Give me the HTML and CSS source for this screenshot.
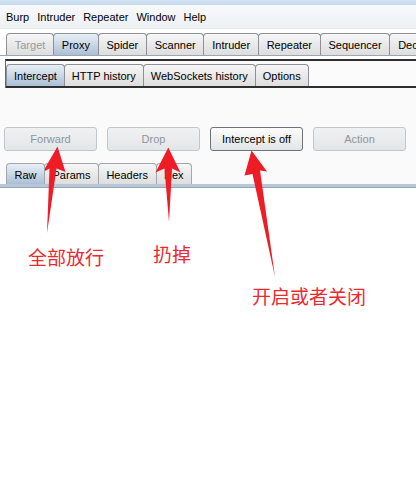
FILE: index.html
```html
<!DOCTYPE html>
<html>
<head>
<meta charset="utf-8">
<link rel="stylesheet" href="styles.css">
</head>
<body>
<div class="app">
  <div class="titlestrip"></div>
  <div class="menubar">
    <span class="menu">Burp</span>
    <span class="menu">Intruder</span>
    <span class="menu">Repeater</span>
    <span class="menu">Window</span>
    <span class="menu">Help</span>
  </div>
  <div class="tabs main-tabs">
    <div class="tab disabled">Target</div>
    <div class="tab sel">Proxy</div>
    <div class="tab">Spider</div>
    <div class="tab">Scanner</div>
    <div class="tab">Intruder</div>
    <div class="tab">Repeater</div>
    <div class="tab">Sequencer</div>
    <div class="tab">Decoder</div>
  </div>
  <div class="proxy-panel">
    <div class="tabs sub-tabs">
      <div class="tab sel">Intercept</div>
      <div class="tab">HTTP history</div>
      <div class="tab">WebSockets history</div>
      <div class="tab">Options</div>
    </div>
  </div>
  <div class="intercept-panel">
    <div class="buttons">
      <div class="btn off">Forward</div>
      <div class="btn off">Drop</div>
      <div class="btn on">Intercept is off</div>
      <div class="btn off">Action</div>
    </div>
    <div class="tabs msg-tabs">
      <div class="tab sel">Raw</div>
      <div class="tab">Params</div>
      <div class="tab">Headers</div>
      <div class="tab">Hex</div>
    </div>
  </div>
  <div class="editor"></div>
</div>

<svg class="arrows" width="416" height="483" viewBox="0 0 416 483" xmlns="http://www.w3.org/2000/svg">
  <polygon points="57.5,146.5 65.5,172 56.5,168.5 47,233 49.5,168.5 42.5,172.5" />
  <polygon points="168.3,147.5 180.5,172.5 172,168.5 169,222 164.5,168.5 155.5,172.5" />
  <polygon points="251.5,150.5 267,171.5 260,170.5 275,277 252.5,174 244.5,175.5" />
</svg>

<div class="note n1">全部放行</div>
<div class="note n2">扔掉</div>
<div class="note n3">开启或者关闭</div>
</body>
</html>
```

FILE: styles.css
```css
html, body {
  margin: 0;
  padding: 0;
}

body {
  width: 416px;
  height: 483px;
  overflow: hidden;
  background: #ffffff;
  position: relative;
  font-family: "Liberation Sans", Arial, sans-serif;
  font-size: 11px;
  color: #000;
}

.app {
  display: flex;
  flex-direction: column;
  height: 483px;
}

.titlestrip {
  height: 5px;
  background: linear-gradient(#d5e4f5, #c4d8ef);
}

.menubar {
  height: 24px;
  display: flex;
  align-items: center;
  padding-left: 2px;
  background: linear-gradient(#f7f9fb, #eef1f4);
  border-bottom: 1px solid #e4e7eb;
  box-sizing: border-box;
}

.menu {
  padding: 0 4px;
  line-height: 14px;
}

.tabs {
  display: flex;
  align-items: flex-end;
  overflow: hidden;
  flex-shrink: 0;
}

.tab {
  flex-shrink: 0;
  box-sizing: border-box;
  border: 1px solid #8d9096;
  border-bottom: none;
  border-radius: 4px 4px 0 0;
  margin-right: -1px;
  background: linear-gradient(#f7f7f7, #e9e9e9 50%, #dedede);
  white-space: nowrap;
  display: flex;
  align-items: center;
}

.tab.sel {
  background: linear-gradient(#e8eff6, #c6d5e5 55%, #aabfd5);
  position: relative;
  z-index: 1;
}

.tab.disabled {
  color: #9a9a9a;
}

.main-tabs {
  margin-top: 4px;
  height: 22px;
  padding-left: 6px;
  border-bottom: 1px solid #9aa6b4;
}

.main-tabs .tab {
  height: 22px;
  padding: 1px 7.75px 0;
}

.proxy-panel {
  margin-top: 3px;
  margin-left: 5px;
  border-left: 1px solid #6a6a6a;
  border-top: 2px solid #2e2e2e;
  padding-top: 3px;
  background: #fbfbfb;
}

.sub-tabs {
  height: 22px;
  border-bottom: 2px solid #2e2e2e;
}

.sub-tabs .tab {
  height: 22px;
  padding: 1px 7px 0;
}

.intercept-panel {
  background: #fafafa;
  padding-top: 39px;
  display: flex;
  flex-direction: column;
}

.buttons {
  display: flex;
  gap: 10px;
  padding-left: 4px;
}

.btn {
  width: 93px;
  height: 24px;
  box-sizing: border-box;
  border-radius: 3px;
  display: flex;
  align-items: center;
  justify-content: center;
  font-size: 11px;
}

.btn.off {
  border: 1px solid #c2c6cc;
  background: linear-gradient(#f0f1f3, #e3e5e8);
  color: #8f959c;
}

.btn.on {
  border: 1px solid #6f7377;
  background: linear-gradient(#fdfdfd, #f0f0f0 50%, #e2e3e5);
  color: #000;
}

.msg-tabs {
  margin-top: 12px;
  padding-left: 6px;
  height: 21px;
}

.msg-tabs .tab {
  height: 21px;
  padding: 1px 7.5px 0;
  border-color: #a3a6ab;
}

.editor {
  border-top: 3px solid #b8c7d8;
  box-shadow: inset 0 1px 0 #97a4b3;
  flex: 1;
  background: #ffffff;
}

.arrows {
  position: absolute;
  left: 0;
  top: 0;
  pointer-events: none;
}

.arrows polygon {
  fill: #ee1c25;
}

.note {
  position: absolute;
  font-family: "Noto Sans CJK SC", "Noto Sans", sans-serif;
  font-size: 19px;
  line-height: 19px;
  color: #ea2a30;
  white-space: nowrap;
}

.n1 { left: 28px; top: 247px; }
.n2 { left: 153px; top: 244px; }
.n3 { left: 252px; top: 286px; }
```
